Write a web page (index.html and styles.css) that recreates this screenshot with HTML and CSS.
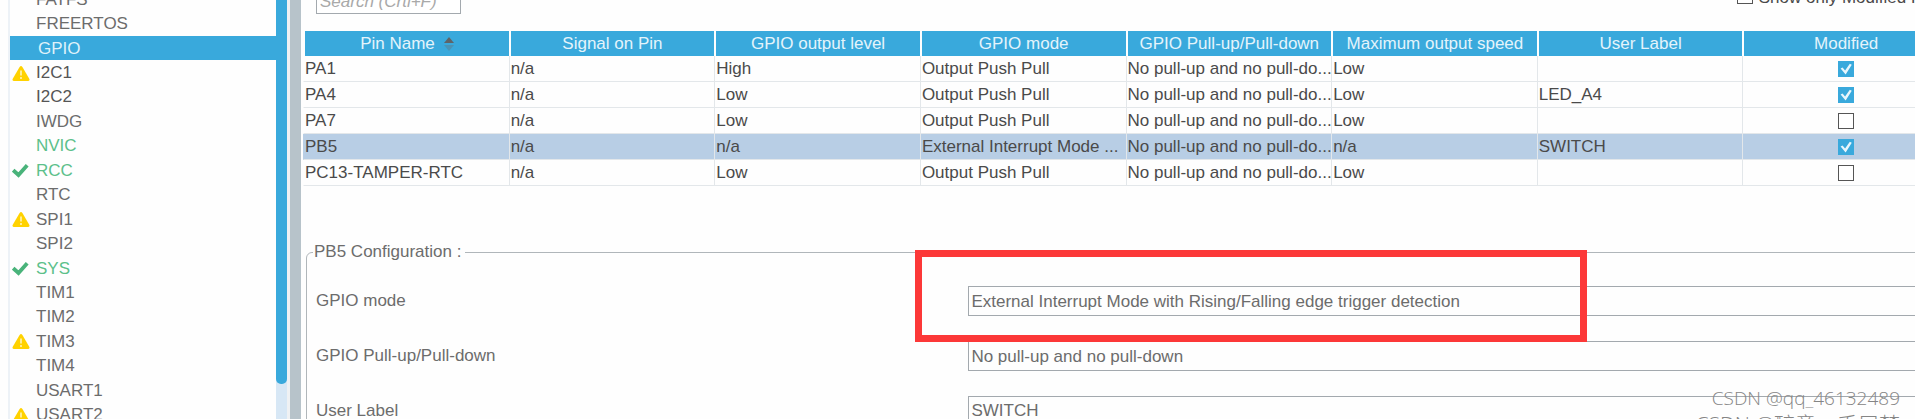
FILE: index.html
```html
<!DOCTYPE html>
<html lang="en">
<head>
  <meta charset="UTF-8">
  <meta name="viewport" content="width=device-width, initial-scale=1.0">
  <title>GPIO Mode and Configuration</title>
  <link rel="stylesheet" href="styles.css">
</head>
<body>
  <svg class="sprite" aria-hidden="true">
    <symbol id="warn" viewBox="0 0 18 15">
      <path d="M7.6 1 Q9 -0.8 10.4 1 L17.4 13 Q17.8 15 16 15 H2 Q0.2 15 0.6 13 Z" fill="#ffd200"/>
      <path d="M9 4.5 V9.5 M9 11 V13" stroke="#fff3b8" stroke-width="1.6"/>
    </symbol>
    <symbol id="ok" viewBox="0 0 18 15">
      <path d="M1.2 7.2 L6.5 12 L15.2 2.2" fill="none" stroke="#49b37a" stroke-width="3.8"/>
    </symbol>
  </svg>

  <div class="app">
    <nav class="sidebar">
      <ul class="periph-list">
        <li><span class="icon"></span><a href="#">FATFS</a></li>
        <li><span class="icon"></span><a href="#">FREERTOS</a></li>
        <li class="selected"><span class="icon"></span><a href="#">GPIO</a></li>
        <li class="dark"><svg class="icon"><use href="#warn"/></svg><a href="#">I2C1</a></li>
        <li class="dark"><span class="icon"></span><a href="#">I2C2</a></li>
        <li><span class="icon"></span><a href="#">IWDG</a></li>
        <li class="enabled"><span class="icon"></span><a href="#">NVIC</a></li>
        <li class="enabled"><svg class="icon"><use href="#ok"/></svg><a href="#">RCC</a></li>
        <li><span class="icon"></span><a href="#">RTC</a></li>
        <li><svg class="icon"><use href="#warn"/></svg><a href="#">SPI1</a></li>
        <li><span class="icon"></span><a href="#">SPI2</a></li>
        <li class="enabled"><svg class="icon"><use href="#ok"/></svg><a href="#">SYS</a></li>
        <li><span class="icon"></span><a href="#">TIM1</a></li>
        <li><span class="icon"></span><a href="#">TIM2</a></li>
        <li><svg class="icon"><use href="#warn"/></svg><a href="#">TIM3</a></li>
        <li><span class="icon"></span><a href="#">TIM4</a></li>
        <li><span class="icon"></span><a href="#">USART1</a></li>
        <li><svg class="icon"><use href="#warn"/></svg><a href="#">USART2</a></li>
      </ul>
      <div class="scrollbar"><div class="thumb"></div></div>
    </nav>
    <div class="splitter"></div>

    <main class="workspace">
      <div class="toolbar">
        <input class="search" type="text" placeholder="Search (Crtl+F)" aria-label="Search">
        <label class="only-modified"><input type="checkbox"> Show only Modified Pins</label>
      </div>

      <table class="pins">
        <thead>
          <tr>
            <th>Pin Name <svg class="sort" viewBox="0 0 10 14"><path d="M0 6 L5 0 L10 6 Z" fill="#5f6468"/><path d="M0 8 L5 14 L10 8 Z" fill="#4a93b5"/></svg></th>
            <th>Signal on Pin</th>
            <th>GPIO output level</th>
            <th>GPIO mode</th>
            <th>GPIO Pull-up/Pull-down</th>
            <th>Maximum output speed</th>
            <th>User Label</th>
            <th>Modified</th>
          </tr>
        </thead>
        <tbody>
          <tr>
            <td>PA1</td><td>n/a</td><td>High</td><td>Output Push Pull</td>
            <td>No pull-up and no pull-do...</td><td>Low</td><td></td>
            <td class="check"><input type="checkbox" aria-label="PA1 modified" checked></td>
          </tr>
          <tr>
            <td>PA4</td><td>n/a</td><td>Low</td><td>Output Push Pull</td>
            <td>No pull-up and no pull-do...</td><td>Low</td><td>LED_A4</td>
            <td class="check"><input type="checkbox" aria-label="PA4 modified" checked></td>
          </tr>
          <tr>
            <td>PA7</td><td>n/a</td><td>Low</td><td>Output Push Pull</td>
            <td>No pull-up and no pull-do...</td><td>Low</td><td></td>
            <td class="check"><input type="checkbox" aria-label="PA7 modified"></td>
          </tr>
          <tr class="selected">
            <td>PB5</td><td>n/a</td><td>n/a</td><td>External Interrupt Mode ...</td>
            <td>No pull-up and no pull-do...</td><td>n/a</td><td>SWITCH</td>
            <td class="check"><input type="checkbox" aria-label="PB5 modified" checked></td>
          </tr>
          <tr>
            <td>PC13-TAMPER-RTC</td><td>n/a</td><td>Low</td><td>Output Push Pull</td>
            <td>No pull-up and no pull-do...</td><td>Low</td><td></td>
            <td class="check"><input type="checkbox" aria-label="PC13 modified"></td>
          </tr>
        </tbody>
      </table>

      <fieldset class="config">
        <legend>PB5 Configuration :</legend>
        <div class="field">
          <label for="mode">GPIO mode</label>
          <select id="mode"><option>External Interrupt Mode with Rising/Falling edge trigger detection</option></select>
        </div>
        <div class="field">
          <label for="pull">GPIO Pull-up/Pull-down</label>
          <select id="pull"><option>No pull-up and no pull-down</option></select>
        </div>
        <div class="field">
          <label for="user-label">User Label</label>
          <input id="user-label" type="text" value="SWITCH">
        </div>
      </fieldset>
      <div class="highlight"></div>
    </main>
  </div>

  <div class="watermark">
    <div>CSDN @qq_46132489</div>
    <div class="author">CSDN @醉意丶千层梦</div>
  </div>
</body>
</html>
```
FILE: styles.css
```css
* {
  box-sizing: border-box;
}
body {
  margin: 0;
  height: 100vh;
  overflow: hidden;
  position: relative;
  background: #fefefe;
  color: #4a4a4a;
  font-family: "Liberation Sans", Arial, sans-serif;
  font-size: 17px;
}
input, select {
  font: inherit;
  color: inherit;
}
.sprite {
  display: none;
}
.app {
  display: flex;
  height: 100vh;
  overflow: hidden;
}

/* peripheral list */
.sidebar {
  display: flex;
  flex: none;
  width: 287px;
  padding-left: 8px;
}
.periph-list {
  flex: 1;
  display: grid;
  grid-auto-rows: 1fr;
  height: 440px;
  margin: -13px 0 0;
  padding: 0;
  list-style: none;
  border-left: 2px solid #edf2f7;
  color: #6c6c6c;
}
.periph-list li {
  display: flex;
  align-items: center;
  gap: 6px;
  padding: 1px 0 0 2px;
}
.periph-list a {
  color: inherit;
  text-decoration: none;
}
.periph-list .icon {
  width: 18px;
  height: 15px;
}
.periph-list .dark {
  color: #555;
}
.periph-list .enabled {
  color: #5cc08a;
}
.periph-list .selected {
  background: #39a9dc;
  color: #dff1fa;
  gap: 8px;
}
.scrollbar {
  width: 11px;
  background: #d7e7f5;
}
.thumb {
  height: 384px;
  background: #39a9dc;
  border-radius: 0 0 5px 5px;
}
.splitter {
  flex: none;
  width: 14px;
  background: #b7c3ca;
  border-left: 3px solid #eff1f3;
}

/* the pane is wider than the window and runs off its right edge */
.workspace {
  flex: 1;
  position: relative;
  min-width: 0;
  margin-right: -33px;
  padding-left: 2px;
}
.toolbar {
  display: flex;
  justify-content: space-between;
  height: 26px;
  margin: -12px 0 17px;
  padding: 0 4px 0 13px;
}
.search {
  width: 145px;
  padding: 2px 3px 0;
  border: 1px solid #a3a9ae;
  background: #fff;
}
.search::placeholder {
  color: #a9a9a9;
  font-style: italic;
}
.only-modified {
  display: flex;
  align-items: flex-start;
  gap: 6px;
  line-height: 19px;
}
input[type="checkbox"] {
  appearance: none;
  display: block;
  width: 16px;
  height: 16px;
  margin: 0;
  border: 1px solid #555;
  background: #fff;
}
input[type="checkbox"]:checked {
  border-color: #39a9dc;
  background: #39a9dc;
}
input[type="checkbox"]:checked::before {
  content: "";
  display: block;
  height: 14px;
  background: #e8f6fc;
  clip-path: polygon(10% 50%, 24% 42%, 42% 64%, 76% 16%, 90% 24%, 46% 92%);
}

.pins {
  width: 100%;
  table-layout: fixed;
  border-collapse: separate;
  border-spacing: 0;
}
.pins th {
  height: 25px;
  padding: 0;
  border-left: 2px solid #fefefe;
  background: #39a9dc;
  color: #e4f4fb;
  font-weight: normal;
}
.pins td {
  height: 26px;
  padding: 0 0 0 1px;
  border-left: 1px solid #e3e7ea;
  border-bottom: 1px solid #e3e7ea;
  overflow: hidden;
  white-space: nowrap;
}
.pins td:first-child {
  border-left-color: transparent;
}
.pins .selected td {
  background: #b8cee5;
}
.pins .check input {
  margin: 0 auto;
}
.sort {
  width: 10px;
  height: 14px;
  margin-left: 4px;
  vertical-align: -2px;
}

.config {
  min-width: 0;
  margin: 56px 0 0 3px;
  padding: 24px 0 0 9px;
  border: 1px solid #b0b6ba;
  border-radius: 6px;
  color: #6c6c6c;
}
.config legend {
  margin-left: -3px;
  padding: 0 4px 0 1px;
  line-height: 20px;
}
.field {
  display: grid;
  grid-template-columns: 2fr 3fr;
  align-items: center;
  margin-bottom: 25px;
}
.field select,
.field input {
  appearance: none;
  width: 100%;
  height: 30px;
  padding: 0 2px;
  border: 1px solid #a3a9ae;
  border-radius: 0;
  background: #fefefe;
}

.highlight {
  position: absolute;
  top: 250px;
  left: 614px;
  width: 672px;
  height: 92px;
  border: 7px solid #fc3838;
}
.watermark {
  position: absolute;
  top: 385px;
  right: 15px;
  color: #858585;
  font-family: "Open Sans", "Noto Sans CJK SC", sans-serif;
  font-size: 19px;
  font-weight: 300;
  line-height: 26px;
  text-align: right;
  white-space: nowrap;
}
.watermark .author {
  font-size: 21px;
}
```
